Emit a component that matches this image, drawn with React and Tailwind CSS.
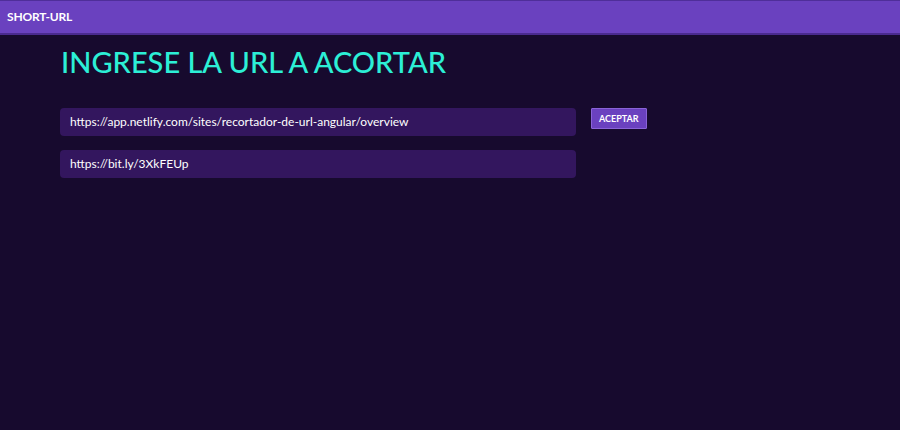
export default function App() {
    return (
        <div className="w-[900px] h-[430px] bg-[#170a2e] font-['Lato','Noto_Sans',sans-serif] overflow-hidden">
            {/* Barra superior */}
            <header className="h-[35px] bg-[#6a41bf] border-t border-[#4f2e99] border-b-2 border-b-[#4a2a8f] flex items-center px-[7px]">
                <span className="text-white text-[12px] font-bold tracking-[-0.2px]">SHORT-URL</span>
            </header>

            <main className="pl-[60px] pt-[10px]">
                <h1 className="text-[#2cefd6] text-[29px] font-medium leading-[34px] ml-[1px]">INGRESE LA URL A ACORTAR</h1>

                <div className="mt-[29px] flex items-start gap-[15px]">
                    <div className="w-[516px] h-[28px] rounded-[4px] bg-[#33165e] flex items-center px-[10px] text-white text-[12px]">
                        https://app.netlify.com/sites/recortador-de-url-angular/overview
                    </div>
                    <button className="h-[21px] px-[7px] bg-[#6a41bf] text-white text-[9px] font-bold border border-[#8a63d8] rounded-[1px]">
                        ACEPTAR
                    </button>
                </div>

                <div className="mt-[14px] w-[516px] h-[28px] rounded-[4px] bg-[#33165e] flex items-center px-[10px] text-white text-[12px]">
                    https://bit.ly/3XkFEUp
                </div>
            </main>
        </div>
    );
}
